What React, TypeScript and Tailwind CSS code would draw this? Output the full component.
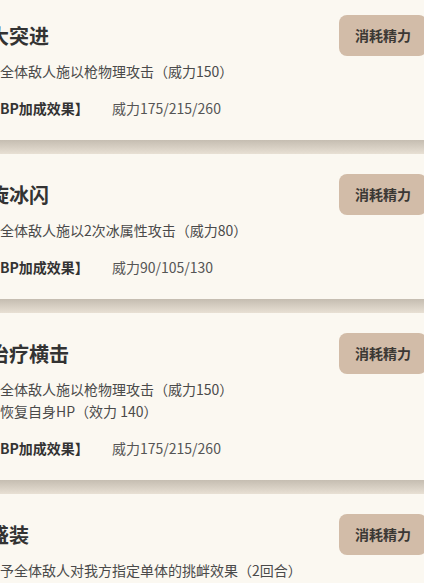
const skills = [
  {
    name: "大突进",
    desc: ["对全体敌人施以枪物理攻击（威力150）"],
    bp: "威力175/215/260",
  },
  {
    name: "旋冰闪",
    desc: ["对全体敌人施以2次冰属性攻击（威力80）"],
    bp: "威力90/105/130",
  },
  {
    name: "治疗横击",
    desc: ["对全体敌人施以枪物理攻击（威力150）", "并恢复自身HP（效力 140）"],
    bp: "威力175/215/260",
  },
  {
    name: "盛装",
    desc: ["给予全体敌人对我方指定单体的挑衅效果（2回合）"],
    bp: "威力175/215/260",
  },
];

const SkillCard = ({ skill }: { skill: (typeof skills)[number] }) => (
  <div className="bg-[#fbf8f1] pt-[20px] pb-[22px] pr-[11px]">
    <div className="flex h-[41px] items-center justify-between">
      <h2 className="ml-[3px] text-[20px] font-bold text-[#333333]">{skill.name}</h2>
      <button className="flex h-[41px] w-[88px] items-center justify-center rounded-[8px] bg-[#d2bca8] text-[14px] font-semibold text-[#3b3834]">
        消耗精力
      </button>
    </div>
    <div className="mt-[4px] text-[14px] leading-[22px] text-[#4a4a4a]">
      {skill.desc.map((line) => (
        <p key={line}>{line}</p>
      ))}
    </div>
    <div className="mt-[16px] flex text-[14px] leading-[20px]">
      <span className="w-[126px] font-bold text-[#333333]">【BP加成效果】</span>
      <span className="text-[#555555]">{skill.bp}</span>
    </div>
  </div>
);

export default function App() {
  return (
    <div
      className="h-[583px] w-[424px] overflow-hidden bg-[#fbf8f1]"
      style={{ fontFamily: '"Noto Sans CJK SC", "Noto Sans", sans-serif' }}
    >
      <div className="-ml-[14px] -mt-[5px] w-[452px]">
        {skills.map((skill, i) => (
          <div key={skill.name}>
            <SkillCard skill={skill} />
            {i < skills.length - 1 && (
              <div className="h-[14px] bg-gradient-to-b from-[#c5bdb1] to-[#e8e0d4]" />
            )}
          </div>
        ))}
      </div>
    </div>
  );
}
